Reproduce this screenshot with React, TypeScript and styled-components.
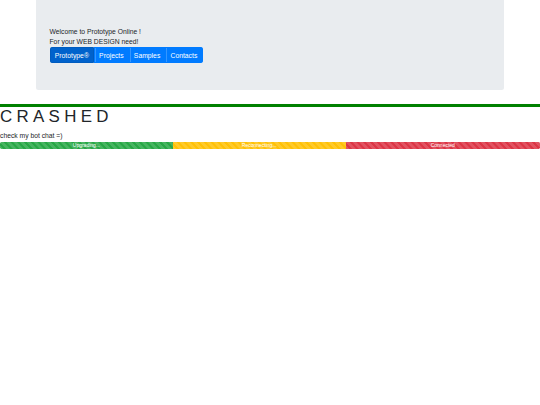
import React from "react";
import styled, { createGlobalStyle } from "styled-components";

const Global = createGlobalStyle`
  html, body { margin: 0; padding: 0; background: #fff; }
  body {
    font-family: "Liberation Sans", Arial, sans-serif;
    font-size: 6.75px;
    line-height: 1.5;
    color: #212529;
  }
  * { box-sizing: border-box; }
`;

const Container = styled.div`
  width: 468px;
  margin: 0 auto;
`;

const Jumbotron = styled.div`
  background: #e9ecef;
  border-radius: 0 0 2.5px 2.5px;
  padding: 27px 13.5px;
  margin-bottom: 13.5px;
`;

const Line = styled.div`
  line-height: 10.1px;
`;

const BtnGroup = styled.div`
  display: inline-flex;
`;

const Btn = styled.button<{ $active?: boolean; $first?: boolean; $last?: boolean }>`
  font-family: inherit;
  font-size: 6.8px;
  line-height: 10.1px;
  height: 16px;
  padding: 2.5px 4.3px;
  margin: 0;
  margin-left: ${(p) => (p.$first ? "0" : "-0.42px")};
  color: #fff;
  background: ${(p) => (p.$active ? "#0062cc" : "#007bff")};
  border: 0.42px solid ${(p) => (p.$active ? "#005cbf" : "#007bff")};
  box-shadow: ${(p) => (p.$first ? "none" : "inset 0.6px 0 0 rgba(255, 255, 255, 0.35)")};
  border-radius: ${(p) =>
    p.$first ? "1.7px 0 0 1.7px" : p.$last ? "0 1.7px 1.7px 0" : "0"};
  cursor: pointer;
`;

const Rule = styled.div`
  height: 3.4px;
  background: #008000;
  box-shadow: 0 -0.5px 0.5px rgba(0, 128, 0, 0.3);
`;

const Title = styled.h1`
  margin: 0 0 3.4px;
  font-size: 16.9px;
  line-height: 20.3px;
  font-weight: 300;
  letter-spacing: 4.3px;
  color: #212529;
`;

const Note = styled.div`
  line-height: 10.1px;
  margin-bottom: 1px;
`;

const Progress = styled.div`
  display: flex;
  height: 6.75px;
  overflow: hidden;
  border-radius: 1.7px;
  background: #e9ecef;
`;

const Bar = styled.div<{ $color: string; $w: string }>`
  width: ${(p) => p.$w};
  display: flex;
  align-items: center;
  justify-content: center;
  color: #fff;
  font-size: 5px;
  line-height: 6.75px;
  white-space: nowrap;
  background-color: ${(p) => p.$color};
  background-image: linear-gradient(
    45deg,
    rgba(255, 255, 255, 0.15) 25%,
    transparent 25%,
    transparent 50%,
    rgba(255, 255, 255, 0.15) 50%,
    rgba(255, 255, 255, 0.15) 75%,
    transparent 75%,
    transparent
  );
  background-size: 6.75px 6.75px;
`;

export default function App() {
  return (
    <>
      <Global />
      <Container>
        <Jumbotron>
          <Line>Welcome to Prototype Online !</Line>
          <Line>For your WEB DESIGN need!</Line>
          <BtnGroup>
            <Btn $active $first>Prototype®</Btn>
            <Btn>Projects</Btn>
            <Btn>Samples</Btn>
            <Btn $last>Contacts</Btn>
          </BtnGroup>
        </Jumbotron>
      </Container>
      <Rule />
      <Title>CRASHED</Title>
      <Note>check my bot chat =)</Note>
      <Progress>
        <Bar $color="#28a745" $w="32%">Upgrading...</Bar>
        <Bar $color="#ffc107" $w="32%">Reconnecting...</Bar>
        <Bar $color="#dc3545" $w="36%">Connected</Bar>
      </Progress>
    </>
  );
}
